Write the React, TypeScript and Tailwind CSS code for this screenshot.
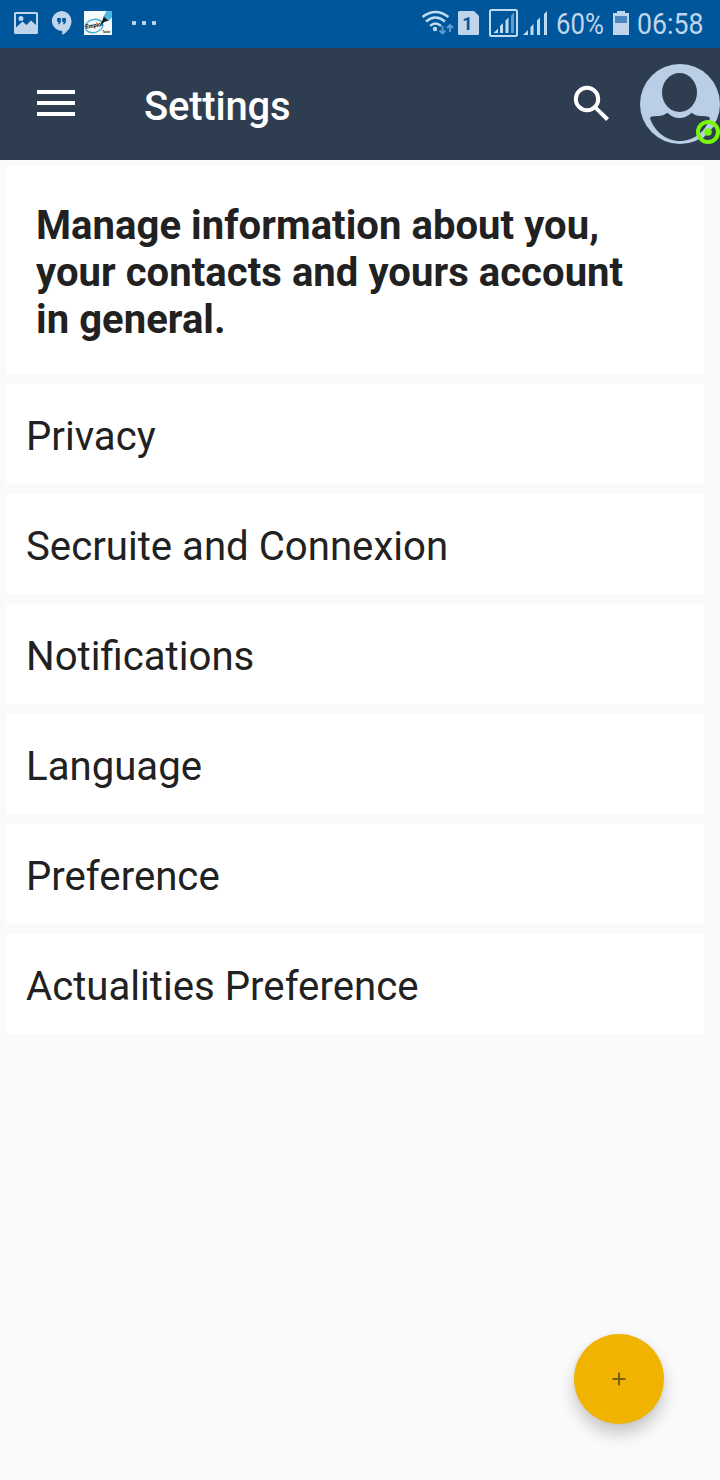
import React from "react";

const items = [
  "Privacy",
  "Secruite and Connexion",
  "Notifications",
  "Language",
  "Preference",
  "Actualities Preference",
];

function StatusBar() {
  return (
    <div className="flex h-12 w-full items-center bg-[#00569b] text-[#bfd5eb]">
      <svg className="ml-3.5 h-12 w-6 shrink-0" viewBox="14 0 24 48">
        <path
          fillRule="evenodd"
          fill="#bfd5eb"
          d="M15.500 12h21a1.500 1.500 0 0 1 1.500 1.500v19a1.500 1.500 0 0 1-1.500 1.500h-21a1.500 1.500 0 0 1-1.500-1.500v-19a1.500 1.500 0 0 1 1.500-1.500zM16 14v13.500l6.500-6 4 3.500 4.500-4.500 5 4.500V14z"
        />
        <circle cx="21" cy="18.500" r="2.500" fill="#bfd5eb" />
      </svg>
      <svg className="ml-3 h-12 w-[22px] shrink-0" viewBox="50 0 22 48">
        <path fill="#bfd5eb" d="M61.500 11a10 10 0 0 1 10 10c0 6-4 11-9.200 14v-4A10 10 0 1 1 61.500 11z" />
        <path fill="#00569b" d="M57.200 18h3.600v4.300L59.200 24.300H58l.8-2.300h-1.600zM62.200 18h3.600v4.300l-1.600 2H63l.8-2.300h-1.600z" />
      </svg>
      <svg className="ml-3 h-12 w-7 shrink-0" viewBox="84 0 28 48">
        <rect x="84" y="11" width="28" height="24" fill="#f5fafc" />
        <ellipse cx="94" cy="26" rx="9" ry="6.500" fill="none" stroke="#3cadd6" strokeWidth="1.400" transform="rotate(-14 94 26)" />
        <path fill="#4eb8e3" d="M106.500 11h5.500v6.500l-3.500 3.500-5-4.500z" />
        <path fill="#101820" d="m103.800 16.500 4.700 4.300-3.800 1-4.200 3.200 1.500-3.500z" />
        <text x="86" y="28.800" fontFamily="Roboto, sans-serif" fontSize="6" fontWeight="800" fill="#101820" textLength="17" lengthAdjust="spacingAndGlyphs" transform="rotate(-9 86 28.800)">Emploi</text>
        <text x="102.500" y="33" fontFamily="Roboto, sans-serif" fontSize="2.800" fontWeight="800" fill="#101820" textLength="7.500" lengthAdjust="spacingAndGlyphs">Tunisie</text>
      </svg>
      <svg className="ml-5 h-12 w-6 shrink-0" viewBox="132 0 24 48" fill="#bfd5eb">
        <rect x="132" y="21" width="4" height="4" rx="1" />
        <rect x="142" y="21" width="4" height="4" rx="1" />
        <rect x="152" y="21" width="4" height="4" rx="1" />
      </svg>

      <svg className="ml-auto h-12 w-8 shrink-0" viewBox="422 0 32 48" fill="none">
        <g stroke="#bfdcf3" strokeWidth="2.400">
          <path d="M422.500 17Q435.500 7 448.500 17" />
          <path d="M426 21.500Q435.500 13.500 445 21.500" />
          <path d="M430 25.800Q435.500 21 441 25.800" />
        </g>
        <circle cx="435" cy="29" r="2.200" fill="#bfdcf3" />
        <path stroke="#5f9bcb" strokeWidth="1.900" d="M442.500 26v7M439.500 30.500l3 3 3-3M450 32v-7M447 28l3-3 3 3" />
      </svg>
      <svg className="ml-1 h-12 w-[21px] shrink-0" viewBox="458 0 21 48">
        <path fill="#bfd5eb" d="M459.500 11H474l5 5v17.500a1.500 1.500 0 0 1-1.500 1.500h-18a1.500 1.500 0 0 1-1.500-1.500v-21a1.500 1.500 0 0 1 1.500-1.500z" />
        <text x="467.500" y="30" textAnchor="middle" fontFamily="Roboto, sans-serif" fontSize="18" fontWeight="700" fill="#00569b">1</text>
      </svg>
      <svg className="ml-2.5 h-12 w-[29px] shrink-0" viewBox="489 0 29 48">
        <rect x="490" y="10" width="27" height="26" rx="1.500" fill="none" stroke="#bfdcf3" strokeWidth="2" />
        <path fill="#bfdcf3" d="M493.500 33l4.500-4.500V33zM500 26l3-3v10h-3zM505.500 20.500l3-3V33h-3z" />
        <path fill="#5f9bcb" d="m511 15.500 3-3V33h-3z" />
      </svg>
      <svg className="ml-[5px] h-12 w-6 shrink-0" viewBox="523 0 24 48">
        <path fill="#bfdcf3" d="M523 35l5-5v5zM530.500 27l3-3V35h-3zM537 20.500l3-3V35h-3zM544 14l3-3v24h-3z" />
      </svg>
      <div className="ml-[9px] w-[49px] shrink-0">
        <span className="inline-block origin-left scale-x-[0.86] text-[30px] leading-12 font-[450] whitespace-nowrap">60%</span>
      </div>
      <svg className="ml-2 h-12 w-4 shrink-0" viewBox="613 0 16 48">
        <path fill="#bfd5eb" d="M617 11h8v2h4v22h-16V13h4z" />
        <rect x="615" y="16" width="12" height="7" fill="#4a89bd" />
      </svg>
      <div className="mr-3.5 ml-2 w-[69px] shrink-0">
        <span className="inline-block origin-left scale-x-[0.89] text-[30px] leading-12 font-[450] whitespace-nowrap">06:58</span>
      </div>
    </div>
  );
}

function Header() {
  return (
    <header className="flex h-28 w-full items-center bg-[#2e3e50] text-white">
      <button className="ml-[37px] flex h-[26px] w-[38px] -translate-y-px flex-col justify-between" aria-label="Menu">
        <span className="h-1 w-full bg-white" />
        <span className="h-1 w-full bg-white" />
        <span className="h-1 w-full bg-white" />
      </button>
      <h1 className="ml-[69px] pt-[5px] text-[40px] leading-[47px] font-medium tracking-[-0.2px]">Settings</h1>
      <button className="ml-auto h-28 w-10 shrink-0" aria-label="Search">
        <svg className="h-28 w-10" viewBox="572 48 40 112" fill="none">
          <circle cx="587" cy="99" r="11.200" stroke="white" strokeWidth="4" />
          <path d="m595 107 2-.5 12 11.500-2.800 3-12-12z" fill="white" />
        </svg>
      </button>
      <svg className="ml-7 h-28 w-20 shrink-0" viewBox="640 48 80 112">
        <circle cx="680" cy="104" r="40" fill="#bacee6" />
        <g fill="#2e3e50">
          <ellipse cx="679.500" cy="92.500" rx="17.500" ry="19.500" />
          <path d="M650 118c0-2.500 8-1.500 12-2.500 2-.7 4-1.500 5.500-2.700 6.500 7 17.500 7 24 0 1.500 1.200 3.500 2 5.500 2.700 4 1 12 0 13 2.500-4 13-16 23-30 23s-26-10-30-23z" />
        </g>
        <path fill="#bacee6" d="m713 120-14 18h4l13-14z" />
        <circle cx="708" cy="132" r="10" fill="none" stroke="#76f808" strokeWidth="4" />
        <circle cx="708" cy="132" r="3.800" fill="#76f808" />
      </svg>
    </header>
  );
}

export default function App() {
  return (
    <div className="relative flex h-[1480px] w-[720px] flex-col overflow-hidden bg-[#fafafa] font-[Roboto,sans-serif] text-[#212121]">
      <StatusBar />
      <Header />
      <main className="flex flex-col gap-2.5 pt-1.5 pr-4 pl-1.5">
        <section className="h-52 bg-white px-[30px] pt-9">
          <p className="text-[40px] leading-[47px] font-bold tracking-[0.06px]">
            Manage information about you,
            <br />
            your contacts and yours account
            <br />
            in general.
          </p>
        </section>
        {items.map((label) => (
          <div key={label} className="flex h-[100px] items-center bg-white px-5 pt-[5px] text-[40px] leading-[47px]">
            <span className="inline-block origin-left scale-x-[1.004]">{label}</span>
          </div>
        ))}
      </main>
      <button
        className="absolute top-[1334px] left-[574px] flex size-[90px] items-center justify-center rounded-full bg-[#f0b400] shadow-[0_10px_16px_rgba(0,0,0,0.2),0_0_4px_rgba(0,0,0,0.06)]"
        aria-label="Add"
      >
        <svg className="size-3.5" viewBox="0 0 14 14">
          <path d="M7 .5v13M.5 7h13" stroke="#78600f" strokeWidth="2" />
        </svg>
      </button>
    </div>
  );
}
